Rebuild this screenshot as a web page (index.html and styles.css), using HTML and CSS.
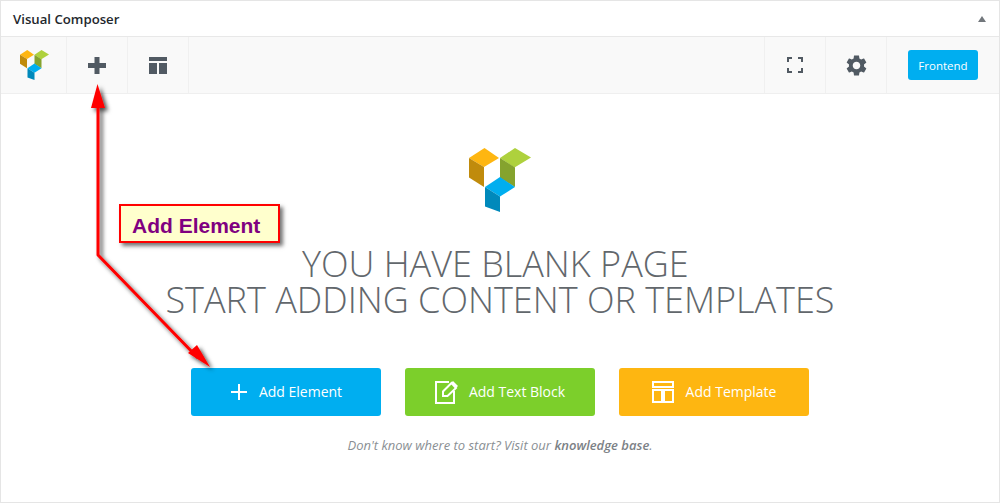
FILE: index.html
```html
<!DOCTYPE html>
<html lang="en">
<head>
<meta charset="utf-8">
<title>Visual Composer</title>
<link rel="stylesheet" href="styles.css">
</head>
<body>
<div class="panel">
  <header class="panel-head">
    <span class="panel-title">Visual Composer</span>
    <span class="panel-toggle"></span>
  </header>
  <nav class="toolbar">
    <div class="tool tool-logo">
      <svg class="toolbar-logo" width="29" height="30" viewBox="0 0 62 64"><use href="#vc-logo"/></svg>
    </div>
    <div class="tool">
      <svg width="18" height="17" viewBox="0 0 18 17"><path class="ico" d="M6.500 0h5v6h6.500v5h-6.500v6h-5v-6H0V6h6.500z"/></svg>
    </div>
    <div class="tool">
      <svg width="18" height="17" viewBox="0 0 18 17"><path class="ico" d="M0 0h18v4H0zM0 6h8v11H0zM10 6h8v11h-8z"/></svg>
    </div>
    <div class="toolbar-space"></div>
    <div class="tool tool-first-right">
      <svg width="16" height="16" viewBox="0 0 16 16"><path class="ico" d="M0 0h5v2H2v3H0zM11 0h5v5h-2V2h-3zM0 11h2v3h3v2H0zM14 11h2v5h-5v-2h3z"/></svg>
    </div>
    <div class="tool">
      <svg width="21" height="21" viewBox="2 2 20 20"><path class="ico" d="M19.140 12.940c.04-.3.06-.61.06-.94 0-.32-.02-.64-.07-.94l2.030-1.580c.18-.14.23-.41.12-.61l-1.920-3.320c-.12-.22-.37-.29-.59-.22l-2.390.96c-.5-.38-1.030-.7-1.620-.94l-.36-2.540c-.04-.24-.24-.41-.48-.41h-3.840c-.24 0-.43.17-.47.41l-.36 2.540c-.59.24-1.130.57-1.620.94l-2.390-.96c-.22-.08-.47 0-.59.22L2.740 8.870c-.12.21-.08.47.12.61l2.030 1.580c-.05.3-.09.63-.09.94s.02.64.07.94l-2.030 1.580c-.18.14-.23.41-.12.61l1.920 3.320c.12.22.37.29.59.22l2.390-.96c.5.38 1.030.7 1.620.94l.36 2.540c.05.24.24.41.48.41h3.840c.24 0 .44-.17.47-.41l.36-2.540c.59-.24 1.130-.56 1.620-.94l2.390.96c.22.08.47 0 .59-.22l1.920-3.320c.12-.22.07-.47-.12-.61l-2.010-1.580zM12 15.600c-1.980 0-3.600-1.620-3.600-3.600s1.620-3.600 3.600-3.600 3.600 1.620 3.600 3.600-1.620 3.600-3.600 3.600z"/></svg>
    </div>
    <div class="tool-action"><a class="frontend-btn">Frontend</a></div>
  </nav>
  <main class="blank">
    <svg class="blank-logo" width="62" height="64" viewBox="0 0 62 64">
      <defs>
        <g id="vc-logo">
          <path fill="#feb611" d="M0 10 15.500 0 30 10 15 19z"/>
          <path fill="#c08b0c" d="M0 10v19.500L15 39V19z"/>
          <path fill="#aed13d" d="M31 10 46 0l16 9.500-16.500 10z"/>
          <path fill="#85a32e" d="M31 10v20l15 9V19.500z"/>
          <path fill="#00aeef" d="M16 39l15-10 15 10-15 9.500z"/>
          <path fill="#0089bb" d="M16 39v19.500L31 64V48.500z"/>
        </g>
      </defs>
      <use href="#vc-logo"/>
    </svg>
    <h1 class="blank-title">YOU HAVE BLANK PAGE&nbsp;<br>START ADDING CONTENT OR TEMPLATES</h1>
    <div class="actions">
      <a class="action action-blue">
        <svg width="16" height="16" viewBox="0 0 16 16"><path class="ico-w" d="M7 0h2v7h7v2H9v7H7V9H0V7h7z"/></svg>
        <span class="action-label">Add Element</span>
      </a>
      <a class="action action-green">
        <svg width="24" height="24" viewBox="0 0 24 24"><path class="line-w" d="M14 2H1v21h18V11"/><path class="line-w" d="M8 16v-4.500L16.500 3 21 8l-8.500 8z"/><path class="ico-w" d="M18 1l5 5-2 2-5-5z"/></svg>
        <span class="action-label">Add Text Block</span>
      </a>
      <a class="action action-amber">
        <svg width="22" height="22" viewBox="0 0 22 22"><path class="line-w" d="M1 1h20v5H1zM1 9h9v12H1zM12 9h9v12h-9z"/></svg>
        <span class="action-label">Add Template</span>
      </a>
    </div>
    <p class="hint">Don't know where to start? Visit our <strong>knowledge base</strong>.</p>
  </main>
  <svg class="arrows" width="1000" height="503" viewBox="0 0 1000 503">
    <defs>
      <filter id="arrow-shadow" x="-20%" y="-20%" width="140%" height="140%">
        <feDropShadow dx="3" dy="3" stdDeviation="2" flood-color="#000" flood-opacity=".7"/>
      </filter>
    </defs>
    <g filter="url(#arrow-shadow)">
      <path class="arrow-line" d="M98 104V255L198 358"/>
      <path class="arrow-head" d="M97.500 84 105 108H91z"/>
      <path class="arrow-head" d="M210 367 188 353 197 345z"/>
    </g>
  </svg>
  <div class="callout">Add Element</div>
</div>
</body>
</html>
```
FILE: styles.css
```css
* { box-sizing: border-box; }
html, body { margin: 0; height: 100%; }
body { font-family: "Open Sans", "Liberation Sans", sans-serif; background: #fff; }
.panel { position: relative; width: 1000px; height: 503px; border: 1px solid #e5e5e5; display: flex; flex-direction: column; overflow: hidden; background: #fff; }
.panel-head { height: 35px; flex: none; display: flex; align-items: center; justify-content: space-between; padding: 0 13px 0 12px; }
.panel-title { font-size: 13.200px; font-weight: 600; color: #23282d; }
.panel-toggle { width: 0; height: 0; border-left: 4px solid transparent; border-right: 4px solid transparent; border-bottom: 6px solid #72777c; }
.toolbar { height: 58px; flex: none; display: flex; background: #f9f9f9; border-top: 1px solid #e8e8e8; border-bottom: 1px solid #efefef; }
.tool { width: 61px; flex: none; display: flex; align-items: center; justify-content: center; border-right: 1px solid #f0f0f0; }
.tool-logo { width: 66px; }
.toolbar-logo { margin-left: 1px; }
.tool-first-right { border-left: 1px solid #f0f0f0; width: 62px; }
.toolbar-space { flex: 1; }
.tool-action { width: 112px; flex: none; display: flex; align-items: center; justify-content: center; }
.ico { fill: #515a63; }
.ico-w { fill: #fff; }
.line-w { fill: none; stroke: #fff; stroke-width: 2; }
.frontend-btn { display: flex; align-items: center; justify-content: center; width: 70px; height: 30px; border-radius: 3px; background: #00aef0; color: #fff; font-size: 11.500px; }
.blank { flex: 1; display: flex; flex-direction: column; align-items: center; padding-top: 54px; }
.blank-logo { flex: none; }
.blank-title { margin: 34px 0 0; font-size: 36px; line-height: 36px; font-weight: 300; color: #62676c; text-align: center; }
.actions { display: flex; gap: 24px; margin-top: 50px; }
.action { width: 190px; height: 48px; border-radius: 3px; display: flex; align-items: center; justify-content: center; gap: 12px; color: #fff; font-size: 14px; }
.action-label { margin-bottom: 2px; }
.action-blue { background: #00aef0; padding-left: 1px; }
.action-green { background: #7ccf2b; gap: 10px; }
.action-amber { background: #feb611; }
.hint { margin: 20px 0 0; font-size: 13px; font-style: italic; color: #8a8f94; }
.hint strong { font-weight: 600; color: #7c8186; }
.arrows { position: absolute; left: -1px; top: -1px; pointer-events: none; }
.arrow-line { fill: none; stroke: #f00; stroke-width: 3; stroke-linejoin: round; }
.arrow-head { fill: #f00; }
.callout { position: absolute; left: 118px; top: 203px; width: 161px; height: 39px; border: 2px solid #f00; background: #ffffcd; box-shadow: 3px 3px 4px rgba(0,0,0,.55); display: flex; align-items: center; padding: 5px 0 0 11px; font-family: "Liberation Sans", Arial, sans-serif; font-size: 21px; font-weight: 700; color: #800080; }
```
